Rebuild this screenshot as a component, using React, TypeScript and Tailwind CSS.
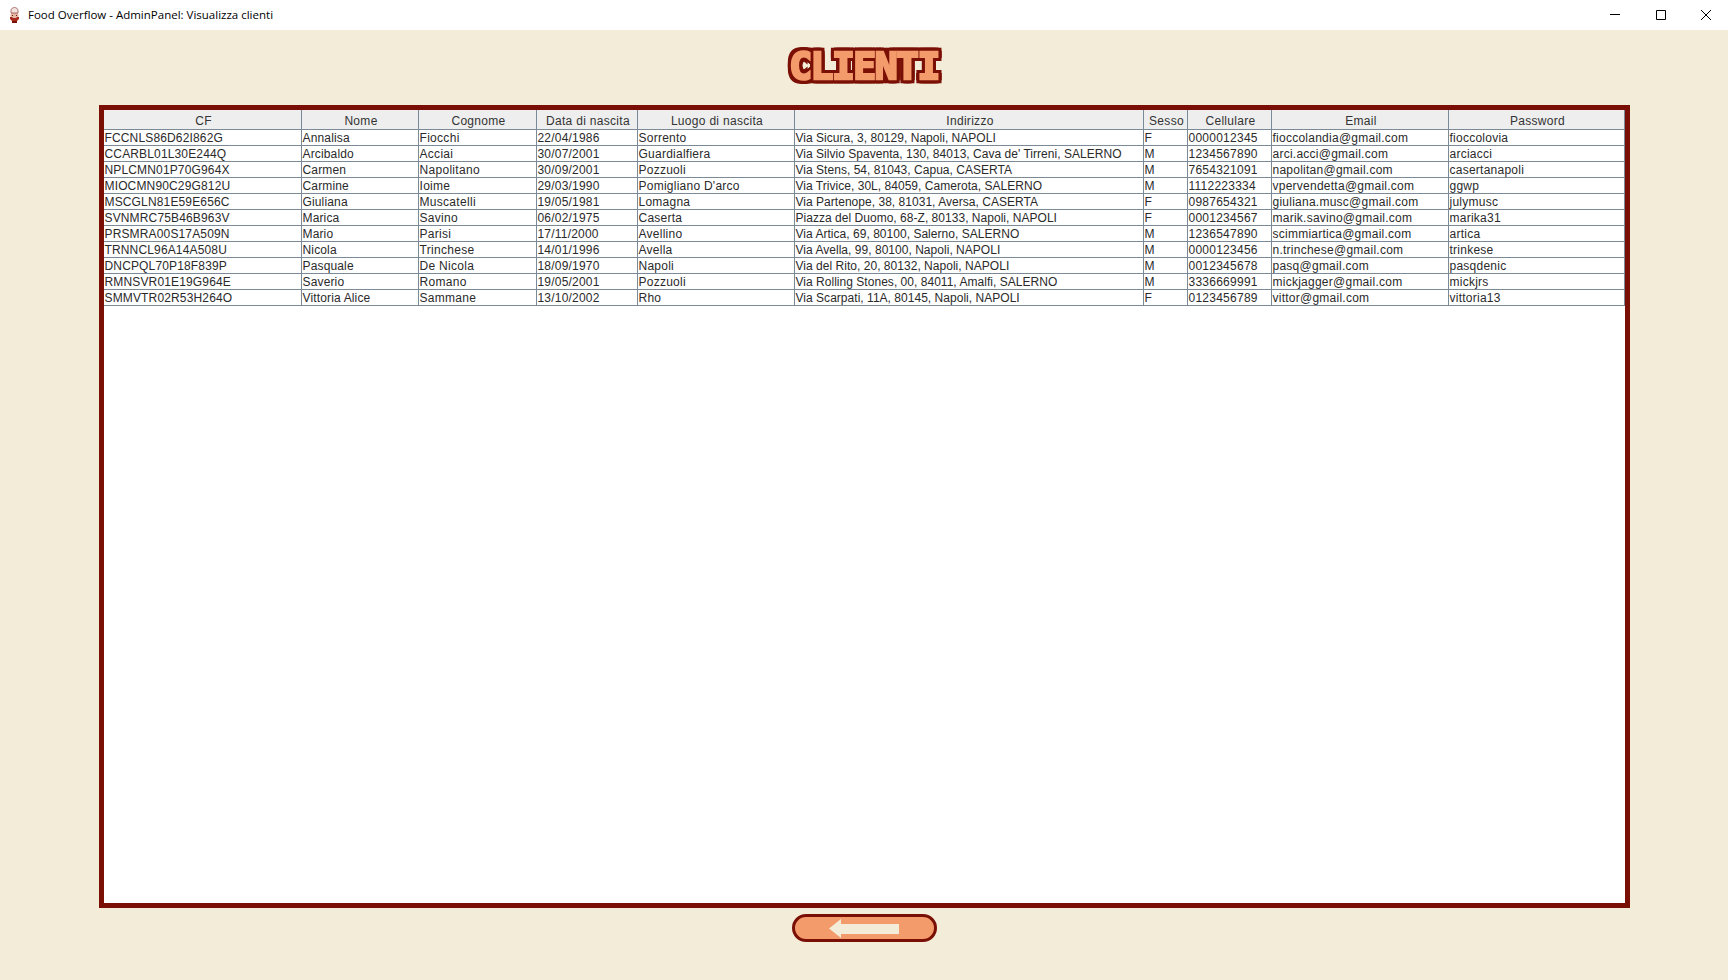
const COLUMNS = [
  { label: "CF", width: "w-[198px]", spacing: "tracking-[0.15px]" },
  { label: "Nome", width: "w-[117px]", spacing: "tracking-[0.15px]" },
  { label: "Cognome", width: "w-[118px]", spacing: "tracking-[0.3px]" },
  { label: "Data di nascita", width: "w-[101px]", spacing: "tracking-[0.2px]" },
  { label: "Luogo di nascita", width: "w-[157px]", spacing: "tracking-[0.25px]" },
  { label: "Indirizzo", width: "w-[349px]", spacing: "tracking-[0.03px]" },
  { label: "Sesso", width: "w-[44px]", spacing: "tracking-[0.2px]" },
  { label: "Cellulare", width: "w-[84px]", spacing: "tracking-[0.25px]" },
  { label: "Email", width: "w-[177px]", spacing: "tracking-[0.25px]" },
  { label: "Password", width: "w-[176px]", spacing: "tracking-[0.25px]" },
];

const CLIENTI = [
  ["FCCNLS86D62I862G", "Annalisa", "Fiocchi", "22/04/1986", "Sorrento", "Via Sicura, 3, 80129, Napoli, NAPOLI", "F", "0000012345", "fioccolandia@gmail.com", "fioccolovia"],
  ["CCARBL01L30E244Q", "Arcibaldo", "Acciai", "30/07/2001", "Guardialfiera", "Via Silvio Spaventa, 130, 84013, Cava de' Tirreni, SALERNO", "M", "1234567890", "arci.acci@gmail.com", "arciacci"],
  ["NPLCMN01P70G964X", "Carmen", "Napolitano", "30/09/2001", "Pozzuoli", "Via Stens, 54, 81043, Capua, CASERTA", "M", "7654321091", "napolitan@gmail.com", "casertanapoli"],
  ["MIOCMN90C29G812U", "Carmine", "Ioime", "29/03/1990", "Pomigliano D'arco", "Via Trivice, 30L, 84059, Camerota, SALERNO", "M", "1112223334", "vpervendetta@gmail.com", "ggwp"],
  ["MSCGLN81E59E656C", "Giuliana", "Muscatelli", "19/05/1981", "Lomagna", "Via Partenope, 38, 81031, Aversa, CASERTA", "F", "0987654321", "giuliana.musc@gmail.com", "julymusc"],
  ["SVNMRC75B46B963V", "Marica", "Savino", "06/02/1975", "Caserta", "Piazza del Duomo, 68-Z, 80133, Napoli, NAPOLI", "F", "0001234567", "marik.savino@gmail.com", "marika31"],
  ["PRSMRA00S17A509N", "Mario", "Parisi", "17/11/2000", "Avellino", "Via Artica, 69, 80100, Salerno, SALERNO", "M", "1236547890", "scimmiartica@gmail.com", "artica"],
  ["TRNNCL96A14A508U", "Nicola", "Trinchese", "14/01/1996", "Avella", "Via Avella, 99, 80100, Napoli, NAPOLI", "M", "0000123456", "n.trinchese@gmail.com", "trinkese"],
  ["DNCPQL70P18F839P", "Pasquale", "De Nicola", "18/09/1970", "Napoli", "Via del Rito, 20, 80132, Napoli, NAPOLI", "M", "0012345678", "pasq@gmail.com", "pasqdenic"],
  ["RMNSVR01E19G964E", "Saverio", "Romano", "19/05/2001", "Pozzuoli", "Via Rolling Stones, 00, 84011, Amalfi, SALERNO", "M", "3336669991", "mickjagger@gmail.com", "mickjrs"],
  ["SMMVTR02R53H264O", "Vittoria Alice", "Sammane", "13/10/2002", "Rho", "Via Scarpati, 11A, 80145, Napoli, NAPOLI", "F", "0123456789", "vittor@gmail.com", "vittoria13"],
];

function ChefIcon() {
  return (
    <svg width="13" height="16" viewBox="0 0 13 16">
      <path d="M3 3.5C3 1.5 5 .5 6.5.5S10 1.500 10 3.500V6H3z" fill="#f1e4de" stroke="#a9706a" strokeWidth="1" />
      <path d="M2.500 7h8v3l-1 2h-6l-1-2z" fill="#e6b9a6" />
      <path d="M3 6h7v1H3z" fill="#c9887c" />
      <path d="M4 8h1v1H4zM8 8h1v1H8z" fill="#5a1a14" />
      <path d="M2 10h2l1 1h3l1-1h2v2l-2 2H4l-2-2z" fill="#a8281c" />
      <path d="M4 14h5v2H4z" fill="#7a0f05" />
    </svg>
  );
}

export default function App() {
  return (
    <div className="flex h-[980px] w-[1728px] flex-col overflow-hidden bg-[#f3ecd8]">
      <div className="flex h-[30px] shrink-0 items-center bg-white">
        <div className="ml-[8px] flex w-[20px] shrink-0">
          <ChefIcon />
        </div>
        <span className="font-['Open_Sans',sans-serif] text-[11.5px] text-black">
          Food Overflow - AdminPanel: Visualizza clienti
        </span>
        <div className="ml-auto flex items-center text-black">
          <div className="flex w-[46px] justify-center">
            <svg width="10" height="10" viewBox="0 0 10 10">
              <path d="M0 4.500h10" stroke="currentColor" fill="none" />
            </svg>
          </div>
          <div className="flex w-[45px] justify-center">
            <svg width="10" height="10" viewBox="0 0 10 10">
              <path d="M.5.500h9v9h-9z" stroke="currentColor" fill="none" />
            </svg>
          </div>
          <div className="flex w-[45px] justify-center">
            <svg width="10" height="10" viewBox="0 0 10 10">
              <path d="M0 0l10 10M10 0L0 10" stroke="currentColor" fill="none" />
            </svg>
          </div>
        </div>
      </div>

      <div className="flex flex-1 flex-col items-center">
        <div className="flex h-[75px] shrink-0 items-center justify-center pb-[3px]">
          <h1 className="font-['DejaVu_Sans_Mono',monospace] text-[38px] leading-none font-bold tracking-[-1.5px] text-[#f49b6c] [-webkit-text-stroke:2.5px_#f49b6c] [filter:drop-shadow(3px_0_0_#7a0f05)_drop-shadow(-3px_0_0_#7a0f05)_drop-shadow(0_3px_0_#7a0f05)_drop-shadow(0_-3px_0_#7a0f05)]">
            CLIENTI
          </h1>
        </div>

        <div className="h-[803px] w-[1531px] shrink-0 border-[5px] border-[#7a0f05] bg-white">
          <table className="table-fixed border-separate border-spacing-0 font-['Liberation_Sans',sans-serif] text-[12px] text-[#2a2a2a]">
            <thead>
              <tr className="h-[20px]">
                {COLUMNS.map((col) => (
                  <th
                    key={col.label}
                    className={`${col.width} border-r border-b border-[#7a8a99] bg-[#eeeeee] pt-[2px] pr-0 pb-0 pl-[3px] text-center text-[12px] leading-none font-normal tracking-[0.3px] text-[#333333]`}
                  >
                    {col.label}
                  </th>
                ))}
              </tr>
            </thead>
            <tbody>
              {CLIENTI.map((row) => (
                <tr key={row[0]} className="h-[16px]">
                  {row.map((value, i) => (
                    <td
                      key={i}
                      className={`${COLUMNS[i].spacing} overflow-hidden border-r border-b border-[#7a8a99] py-0 pr-0 pl-[1px] leading-none whitespace-nowrap`}
                    >
                      {value}
                    </td>
                  ))}
                </tr>
              ))}
            </tbody>
          </table>
        </div>

        <button
          type="button"
          className="mt-[6px] flex h-[28px] w-[145px] items-center justify-center rounded-full border-[3px] border-[#7a0f05] bg-[#f49b6c]"
        >
          <svg width="70" height="19" viewBox="0 0 70 19">
            <path d="M0 9.500 12 0v5h58v10H12v4z" fill="#f3ecd8" />
          </svg>
        </button>
      </div>
    </div>
  );
}
